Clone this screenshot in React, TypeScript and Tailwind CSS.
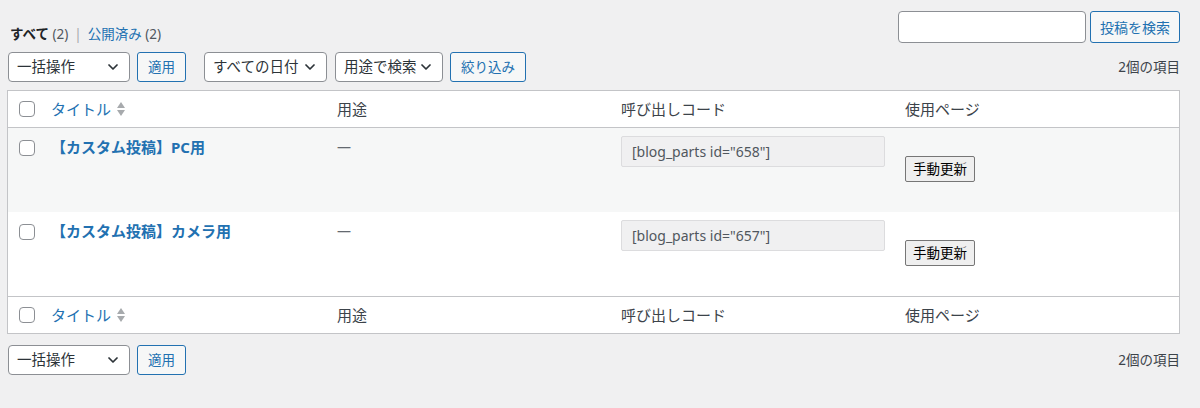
import type { ReactNode } from 'react';

const FONT = "font-['Segoe_UI','Noto_Sans','Noto_Sans_CJK_JP',sans-serif]";

const POSTS = [
    { title: '【カスタム投稿】PC用', id: '658' },
    { title: '【カスタム投稿】カメラ用', id: '657' },
];

function Chevron() {
    return (
        <svg width="16" height="16" viewBox="0 0 20 20" className="shrink-0">
            <path d="M5 7.5l5 5 5-5" fill="none" stroke="#2c3338" strokeWidth="2.2" strokeLinecap="round" strokeLinejoin="round" />
        </svg>
    );
}

function SortIcon() {
    return (
        <svg width="10" height="18" viewBox="0 0 10 18" className="ml-[5px]">
            <path d="M5 2l4 6H1z" fill="#a7aaad" />
            <path d="M5 16l4-6H1z" fill="#a7aaad" />
        </svg>
    );
}

function Select({ label, width }: { label: string; width: string }) {
    return (
        <div
            className={`${width} flex h-[30px] items-center justify-between rounded-[4px] border border-[#8c8f94] bg-white pl-[8px] pr-[8px] text-[14.5px] text-[#2c3338]`}
        >
            <span>{label}</span>
            <Chevron />
        </div>
    );
}

function Button({ children, className = '' }: { children: ReactNode; className?: string }) {
    return (
        <div
            className={`flex h-[30px] items-center justify-center rounded-[3px] border border-[#2271b1] bg-[#f6f7f7] text-[13.5px] text-[#2271b1] ${className}`}
        >
            {children}
        </div>
    );
}

function Checkbox() {
    return <div className="h-[16px] w-[16px] shrink-0 rounded-[4px] border border-[#8c8f94] bg-white" />;
}

function HeaderRow({ top }: { top?: boolean }) {
    return (
        <div
            className={`flex h-[37px] items-center text-[15px] text-[#3c434a] ${top ? 'border-b' : 'border-t'} border-[#c3c4c7]`}
        >
            <div className="w-[43px] pl-[11px]">
                <Checkbox />
            </div>
            <div className="flex w-[286px] items-center text-[#2271b1]">
                タイトル
                <SortIcon />
            </div>
            <div className="w-[284px]">用途</div>
            <div className="w-[284px]">呼び出しコード</div>
            <div>使用ページ</div>
        </div>
    );
}

function PostRow({ title, id, striped }: { title: string; id: string; striped: boolean }) {
    return (
        <div className={`flex h-[84px] items-start ${striped ? 'bg-[#f6f7f7]' : 'bg-white'}`}>
            <div className="w-[43px] pl-[11px] pt-[12px]">
                <Checkbox />
            </div>
            <div className="w-[286px] pt-[8px] text-[15px] font-bold text-[#2271b1]">{title}</div>
            <div className="w-[284px] pt-[8px] text-[14px] text-[#646970]">—</div>
            <div className="w-[284px] pt-[8px]">
                <div className="flex h-[31px] w-[264px] items-center rounded-[2px] border border-[#dcdcde] bg-[#f0f0f1] pl-[10px] text-[14px] text-[#50575e]">
                    [blog_parts id="{id}"]
                </div>
            </div>
            <div className="pt-[28px]">
                <div className="flex h-[26px] w-[70px] items-center justify-center rounded-[2px] border border-[#767676] bg-[#efefef] text-[13.5px] text-black">
                    手動更新
                </div>
            </div>
        </div>
    );
}

export default function App() {
    return (
        <div className={`${FONT} min-h-[408px] bg-[#f0f0f1] pl-[7px] pr-[20px] pt-[11px]`}>
            <div className="flex items-start justify-between">
                <div className="pl-[3px] pt-[14px] text-[13.5px] leading-[18px] text-[#50575e]">
                    <span className="font-bold text-[#1d2327]">すべて</span> (2)
                    <span className="mx-[6px] text-[#a7aaad]">|</span>
                    <span className="text-[#2271b1]">公開済み</span> (2)
                </div>
                <div className="flex gap-[4px]">
                    <div className="h-[32px] w-[188px] rounded-[4px] border border-[#8c8f94] bg-white" />
                    <Button className="h-[32px] w-[90px] text-[14px]">投稿を検索</Button>
                </div>
            </div>

            <div className="mt-[9px] flex items-center pl-[1px]">
                <Select label="一括操作" width="w-[122px]" />
                <Button className="ml-[7px] w-[49px]">適用</Button>
                <Select label="すべての日付" width="ml-[18px] w-[123px]" />
                <Select label="用途で検索" width="ml-[8px] w-[108px]" />
                <Button className="ml-[7px] w-[76px]">絞り込み</Button>
                <div className="ml-auto text-[13.5px] text-[#3c434a]">2個の項目</div>
            </div>

            <div className="mt-[8px] border border-[#c3c4c7] bg-white">
                <HeaderRow top />
                {POSTS.map((post, i) => (
                    <PostRow key={post.id} title={post.title} id={post.id} striped={i % 2 === 0} />
                ))}
                <HeaderRow />
            </div>

            <div className="mt-[11px] flex items-center pl-[1px]">
                <Select label="一括操作" width="w-[122px]" />
                <Button className="ml-[7px] w-[49px]">適用</Button>
                <div className="ml-auto text-[13.5px] text-[#3c434a]">2個の項目</div>
            </div>
        </div>
    );
}
